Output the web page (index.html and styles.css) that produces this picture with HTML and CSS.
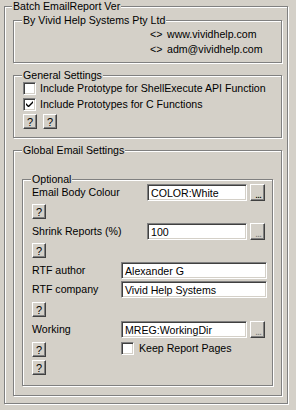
FILE: index.html
```html
<!DOCTYPE html>
<html lang="en">
<head>
    <meta charset="UTF-8">
    <title>Batch EmailReport</title>
    <link rel="stylesheet" href="styles.css">
</head>
<body>
    <fieldset class="group outer">
        <legend>Batch EmailReport Ver</legend>

        <!-- About -->
        <fieldset class="group about">
            <legend>By Vivid Help Systems Pty Ltd</legend>
            <div class="links">
                <div class="link"><span class="arrow">&lt;&gt;</span>www.vividhelp.com</div>
                <div class="link"><span class="arrow">&lt;&gt;</span>adm@vividhelp.com</div>
            </div>
        </fieldset>

        <!-- General -->
        <fieldset class="group general">
            <legend>General Settings</legend>
            <label class="check"><span class="box"></span>Include Prototype for ShellExecute API Function</label>
            <label class="check"><span class="box"><svg width="9" height="9" viewBox="0 0 9 9"><path d="M1 3v2l2 2h1l4-4V1L3.5 5.5z" fill="#000"/></svg></span>Include Prototypes for C Functions</label>
            <div class="help-row">
                <button class="help">?</button>
                <button class="help">?</button>
            </div>
        </fieldset>

        <!-- Global email -->
        <fieldset class="group global">
            <legend>Global Email Settings</legend>
            <fieldset class="group optional">
                <legend>Optional</legend>

                <div class="field first">
                    <span class="label wide">Email Body Colour</span>
                    <span class="edit short">COLOR:White</span>
                    <button class="browse">...</button>
                </div>
                <button class="help gap3">?</button>

                <div class="field">
                    <span class="label wide">Shrink Reports (%)</span>
                    <span class="edit short">100</span>
                    <button class="browse off">...</button>
                </div>
                <button class="help gap3">?</button>

                <div class="field">
                    <span class="label">RTF author</span>
                    <span class="edit long">Alexander G</span>
                </div>
                <div class="field tight">
                    <span class="label">RTF company</span>
                    <span class="edit long">Vivid Help Systems</span>
                </div>
                <button class="help gap4">?</button>

                <div class="field">
                    <span class="label">Working</span>
                    <span class="edit mid">MREG:WorkingDir</span>
                    <button class="browse off">...</button>
                </div>
                <div class="field">
                    <span class="label"><button class="help">?</button></span>
                    <label class="check keep"><span class="box"></span>Keep Report Pages</label>
                </div>
                <button class="help gap3">?</button>
            </fieldset>
        </fieldset>
    </fieldset>
</body>
</html>
```

FILE: styles.css
```css
body {
    margin: 0;
    background-color: #d4d0c8;
    font-family: 'Liberation Sans', Arial, sans-serif;
    font-size: 10.6px;
    line-height: 13px;
    color: #000;
    width: 296px;
    height: 410px;
    overflow: hidden;
}

/* Etched group boxes */
.group {
    margin: 0;
    padding: 0;
    border: 1px solid #808080;
    box-shadow: inset 1px 1px 0 #fff, 1px 1px 0 #fff;
    box-sizing: border-box;
    min-width: 0;
}

.group legend {
    padding: 0 1px;
    margin-left: -1px;
    line-height: 13px;
    background-color: #d4d0c8;
}

.outer {
    margin-left: 4px;
    width: 284px;
    padding: 1px 5px 7px 8px;
}

.about {
    padding: 0 0 5px 9px;
}

.links {
    margin-left: 127px;
}

.link {
    line-height: 15px;
}

.arrow {
    display: inline-block;
    width: 17px;
}

.general {
    margin-top: 6px;
    padding: 0 0 8px 9px;
}

.check {
    display: flex;
    align-items: flex-start;
    height: 16px;
}

.box {
    width: 13px;
    height: 13px;
    box-sizing: border-box;
    background: #fff;
    border: 1px solid;
    border-color: #808080 #fff #fff #808080;
    box-shadow: inset 1px 1px 0 #404040, inset -1px -1px 0 #d4d0c8;
    margin-right: 4px;
    display: flex;
    align-items: center;
    justify-content: center;
    flex-shrink: 0;
}

.help-row {
    display: flex;
    gap: 6px;
}

button {
    font-family: inherit;
    font-size: 11px;
    color: #000;
    background-color: #d4d0c8;
    box-sizing: border-box;
    border: 1px solid;
    border-color: #fff #404040 #404040 #fff;
    box-shadow: inset -1px -1px 0 #808080;
    padding: 0;
    margin: 0;
    line-height: 12px;
    display: block;
}

.help {
    width: 14px;
    height: 15px;
}

.global {
    margin-top: 6px;
    padding: 0 8px 9px 8px;
}

.global > legend {
    margin-left: 0;
}

.optional {
    margin-top: 16px;
    padding: 0 0 10px 9px;
}

.field {
    display: flex;
    align-items: center;
    margin-top: 4px;
}

.field.first {
    margin-top: -2px;
}

.field.tight {
    margin-top: 2px;
}

.label {
    width: 89px;
    flex-shrink: 0;
}

.label.wide {
    width: 115px;
}

.edit {
    height: 17px;
    box-sizing: border-box;
    background: #fff;
    border: 1px solid;
    border-color: #808080 #fff #fff #808080;
    box-shadow: inset 1px 1px 0 #404040, inset -1px -1px 0 #d4d0c8;
    padding: 1px 3px 0 3px;
    line-height: 14px;
}

.edit.short {
    width: 100px;
}

.edit.mid {
    width: 126px;
}

.edit.long {
    width: 146px;
}

.browse {
    width: 15px;
    height: 17px;
    margin-left: 3px;
    padding-top: 3px;
    letter-spacing: -1px;
    text-indent: 1px;
}

.browse.off {
    color: #808080;
}

.gap3 {
    margin-top: 3px;
}

.gap4 {
    margin-top: 4px;
}

.keep {
    height: 15px;
}

.keep .box {
    margin-right: 5px;
}
```
